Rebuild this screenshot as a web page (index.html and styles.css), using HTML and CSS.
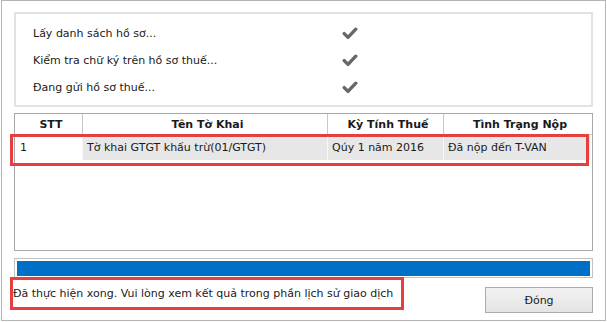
FILE: index.html
```html
<!DOCTYPE html>
<html>
<head>
<meta charset="utf-8">
<link rel="stylesheet" href="styles.css">
</head>
<body>
<div class="window">
  <div class="steps">
    <div class="step"><span class="label">Lấy danh sách hồ sơ...</span><svg class="check" viewBox="0 0 16 13"><path d="M2.2 6.6 L6 10.4 L13.8 2.2"/></svg></div>
    <div class="step"><span class="label">Kiểm tra chữ ký trên hồ sơ thuế...</span><svg class="check" viewBox="0 0 16 13"><path d="M2.2 6.6 L6 10.4 L13.8 2.2"/></svg></div>
    <div class="step"><span class="label">Đang gửi hồ sơ thuế...</span><svg class="check" viewBox="0 0 16 13"><path d="M2.2 6.6 L6 10.4 L13.8 2.2"/></svg></div>
  </div>
  <div class="grid">
    <div class="row head">
      <div class="c c1">STT</div>
      <div class="c c2">Tên Tờ Khai</div>
      <div class="c c3">Kỳ Tính Thuế</div>
      <div class="c c4">Tình Trạng Nộp</div>
    </div>
    <div class="row data">
      <div class="c c1 focus">1</div>
      <div class="c c2">Tờ khai GTGT khấu trừ(01/GTGT)</div>
      <div class="c c3">Qúy 1 năm 2016</div>
      <div class="c c4">Đã nộp đến T-VAN</div>
    </div>
    <div class="mark"></div>
  </div>
  <div class="progress"><div class="fill"></div></div>
  <div class="bottom">
    <div class="status">Đã thực hiện xong. Vui lòng xem kết quả trong phần lịch sử giao dịch</div>
    <button class="btn">Đóng</button>
  </div>
</div>
</body>
</html>
```
FILE: styles.css
```css
* { box-sizing: border-box; }
html, body { margin: 0; padding: 0; background: #ffffff; }
body {
  font-family: "DejaVu Sans", "Liberation Sans", sans-serif;
  font-size: 11px;
  color: #1a1a1a;
}
.window {
  margin-left: 1px;
  width: 605px;
  height: 321px;
  border: 1px solid #b5b5b5;
  padding: 11px 12px 0 12px;
  display: flex;
  flex-direction: column;
}
.steps {
  height: 95px;
  border: 2px solid #e2e2e2;
  padding: 6px 0 0 17px;
  display: flex;
  flex-direction: column;
}
.step {
  height: 27px;
  display: flex;
  align-items: center;
}
.label { width: 309px; }
.check { width: 16px; height: 13px; }
.check path {
  fill: none;
  stroke: #676767;
  stroke-width: 3.4;
  stroke-linecap: round;
  stroke-linejoin: round;
}
.grid {
  position: relative;
  margin-top: 6px;
  height: 138px;
  border: 1px solid #a9a9a9;
}
.row { display: flex; }
.head {
  height: 21px;
  border-bottom: 1px solid #c9c9c9;
}
.head .c {
  font-weight: bold;
  text-align: center;
  justify-content: center;
  border-right: 1px solid #c9c9c9;
}
.head .c4 { border-right: none; }
.c {
  display: flex;
  align-items: center;
  padding-left: 5px;
  white-space: nowrap;
}
.c1 { width: 68px; }
.c2 { width: 245px; }
.c3 { width: 116px; }
.c4 { width: 147px; }
.data { height: 25px; }
.data .c {
  background: #e7e7e7;
  border-right: 1px solid #f7f7f7;
  padding-left: 4px;
}
.data .c.focus { background: #ffffff; padding-left: 5px; }
.mark {
  position: absolute;
  left: -5px;
  top: 20px;
  width: 579px;
  height: 32px;
  border: 3px solid #e5403d;
}
.progress {
  margin-top: 7px;
  height: 20px;
  border: 1px solid #c2c2c2;
  padding: 2px 2px 1px 2px;
}
.fill { height: 100%; background: #0070c6; }
.bottom {
  margin-top: -1px;
  display: flex;
  justify-content: space-between;
  align-items: flex-start;
}
.status {
  margin-left: -4px;
  width: 394px;
  height: 33px;
  border: 3px solid #e5403d;
  padding-left: 0;
  display: flex;
  align-items: center;
  white-space: nowrap;
}
.btn {
  margin-top: 10px;
  width: 108px;
  height: 26px;
  border: 1px solid #acacac;
  background: linear-gradient(#f2f2f2, #e4e4e4);
  font-family: "DejaVu Sans", "Liberation Sans", sans-serif;
  font-size: 11px;
  color: #1a1a1a;
  padding: 0;
}
```
